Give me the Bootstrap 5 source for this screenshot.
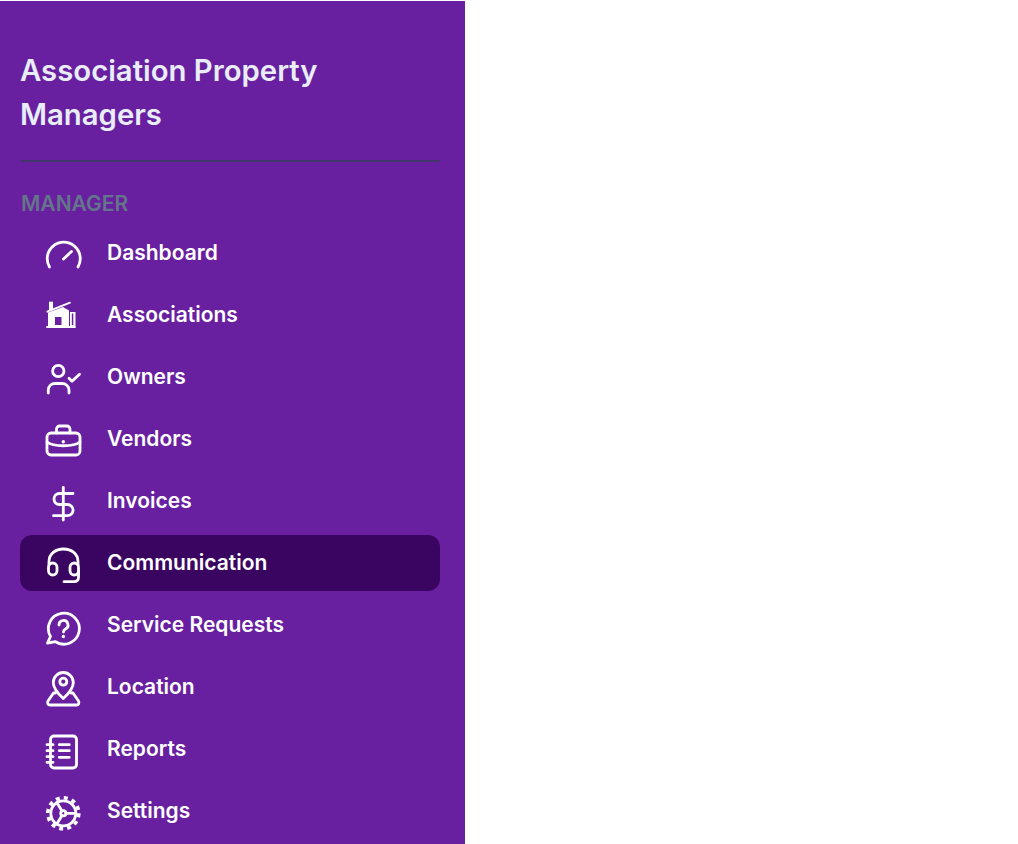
<!DOCTYPE html>
<html lang="en">
<head>
    <meta charset="UTF-8">
    <meta name="viewport" content="width=device-width, initial-scale=1.0">
    <title>Association Property Managers</title>
    <link rel="stylesheet" href="https://cdn.jsdelivr.net/npm/bootstrap@5.3.0/dist/css/bootstrap.min.css">
    <style>
        body { font-family: Inter, "Liberation Sans", sans-serif; background: #fff; }
        .side-panel { width: 465px; height: 843px; margin-top: 1px; background: #6820a0; overflow: hidden; padding: 48px 25px 0 20px; }
        .brand-title { font-size: 29.3px; line-height: 44px; font-weight: 600; color: #e8edf7; margin: 0; }
        .brand-rule { height: 2px; margin: 23px 0 0 1px; background: #403669; opacity: 1; border: 0; }
        .section-label { font-size: 21px; line-height: 28px; font-weight: 600; color: #64748b; margin: 28px 0 7px 1px; }
        .side-nav { gap: 6px; }
        .side-link { height: 56px; padding: 0 0 0 25px; gap: 26px; color: #fff; font-size: 21px; font-weight: 600; border-radius: 12px; }
        .side-link:hover, .side-link:focus { color: #fff; }
        .side-link.active { background: #3a0560; }
        .side-link svg { width: 36px; height: 36px; flex: none; overflow: visible; fill: none; stroke: #fff; stroke-width: 2.8; stroke-linecap: round; stroke-linejoin: round; }
        .side-link svg .solid { fill: #fff; stroke: none; }
        .side-link svg .cut { fill: #6820a0; stroke: none; }
    </style>
</head>
<body>
    <div class="side-panel">
        <h1 class="brand-title">Association Property Managers</h1>
        <hr class="brand-rule">
        <div class="section-label text-uppercase">Manager</div>
        <nav class="nav flex-column side-nav">
            <a class="nav-link side-link d-flex align-items-center" href="#">
                <svg viewBox="0 0 36 36"><path d="M4.500 32A16.500 16.500 0 1 1 33 32"/><path d="M18.500 24l8-7.500"/></svg>
                Dashboard
            </a>
            <a class="nav-link side-link d-flex align-items-center" href="#">
                <svg viewBox="0 0 36 36">
                    <path class="solid" d="M3 15.500L18 10l6 3.500V29H3z"/>
                    <path class="solid" d="M4 4.700H8V13H4z"/>
                    <path class="cut" d="M10 20h6.500v8H10z"/>
                    <path d="M2.300 14.700L25 5.700M2 30h28" stroke-width="1.800"/>
                    <path class="solid" d="M25 15h5.500v14H25z"/>
                    <path class="cut" d="M26.800 16.500h1.500V28h-1.500z"/>
                </svg>
                Associations
            </a>
            <a class="nav-link side-link d-flex align-items-center" href="#">
                <svg viewBox="0 0 36 36">
                    <circle cx="13.300" cy="12" r="5.700"/>
                    <path d="M3.300 34v-3c0-4 3.200-6.500 6.700-6.500h7c3.500 0 7 2.500 7 6.500v3"/>
                    <path d="M24 19.300l3 3 7.500-7"/>
                </svg>
                Owners
            </a>
            <a class="nav-link side-link d-flex align-items-center" href="#">
                <svg viewBox="0 0 36 36">
                    <rect x="2" y="12" width="33" height="22" rx="4"/>
                    <path d="M11.500 12V8a3 3 0 0 1 3-3h7.500a3 3 0 0 1 3 3v4"/>
                    <path d="M2 21c6 5 27 5 33 0"/>
                    <circle class="solid" cx="18.300" cy="20.700" r="1.700"/>
                </svg>
                Vendors
            </a>
            <a class="nav-link side-link d-flex align-items-center" href="#">
                <svg viewBox="0 0 36 36">
                    <path d="M18.300 4.500V37"/>
                    <path d="M28 10.500H14.500a5.500 5.500 0 0 0 0 11h8a5.600 5.600 0 0 1 0 11.200H8.500"/>
                </svg>
                Invoices
            </a>
            <a class="nav-link side-link active d-flex align-items-center" href="#">
                <svg viewBox="0 0 36 36">
                    <path d="M4 20V16.500C4 9 10.500 4 18.500 4S33 9 33 16.500V20"/>
                    <rect x="3.500" y="18" width="8.500" height="12" rx="4.200"/>
                    <rect x="25" y="18" width="8.500" height="12" rx="4.200"/>
                    <path d="M33.500 26v6c0 3-1.500 4.700-4.500 4.700H19"/>
                </svg>
                Communication
            </a>
            <a class="nav-link side-link d-flex align-items-center" href="#">
                <svg viewBox="0 0 36 36">
                    <path d="M2.500 36l3-6.500A15.500 15.500 0 1 1 10.500 34.700z"/>
                    <path d="M14 18a4.500 4.500 0 1 1 6.500 4c-1.500.8-2 1.800-2 3"/>
                    <circle class="solid" cx="18.400" cy="29.500" r="1.700"/>
                </svg>
                Service Requests
            </a>
            <a class="nav-link side-link d-flex align-items-center" href="#">
                <svg viewBox="0 0 36 36">
                    <path d="M18.300 29.500c-5-4.500-10-9.500-10-16a10 10 0 0 1 20 0c0 6.500-5 11.500-10 16z"/>
                    <circle cx="18.300" cy="12.700" r="3.500"/>
                    <path d="M10.500 24H8.500L3 32c-1.200 2 0 4 2 4h26.500c2 0 3.200-2 2-4L28 24h-2"/>
                </svg>
                Location
            </a>
            <a class="nav-link side-link d-flex align-items-center" href="#">
                <svg viewBox="0 0 36 36">
                    <rect x="5.500" y="5" width="26" height="32" rx="3.500"/>
                    <path d="M2 13.700h6M2 19.700h6M2 25.700h6M2 31.300h6M14.300 13.700h10M14.300 19.700h10M14.300 26.300h10"/>
                </svg>
                Reports
            </a>
            <a class="nav-link side-link d-flex align-items-center" href="#">
                <svg viewBox="0 0 36 36">
                    <circle cx="18.300" cy="20.300" r="12.500"/>
                    <circle cx="18.300" cy="20.300" r="15.500" stroke-width="3.600" stroke-dasharray="4 4.120" stroke-linecap="butt"/>
                    <circle cx="18.300" cy="20.300" r="2.600"/>
                    <path d="M20.900 20.300H30.800M17 18L11.800 9.500M17 22.500L11.800 31"/>
                </svg>
                Settings
            </a>
        </nav>
    </div>
    <script src="https://cdn.jsdelivr.net/npm/bootstrap@5.3.0/dist/js/bootstrap.bundle.min.js"></script>
</body>
</html>
